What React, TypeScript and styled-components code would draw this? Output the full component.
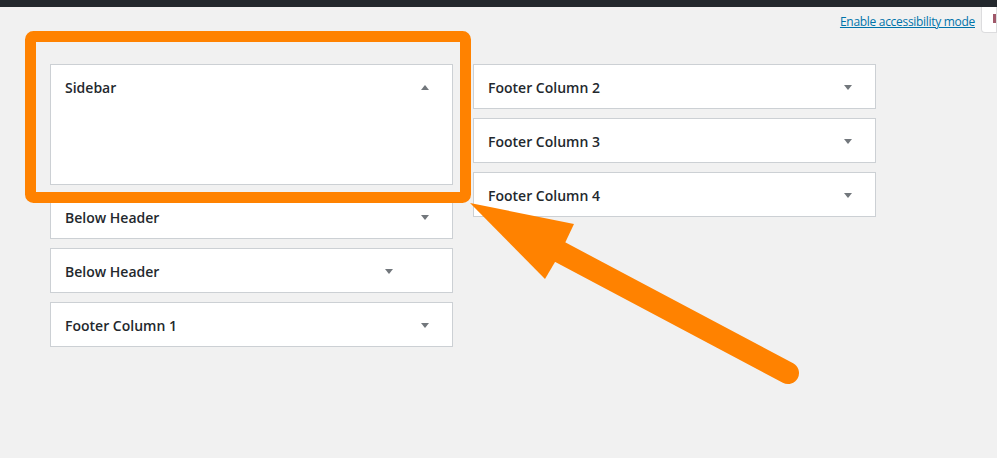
import React from 'react';
import styled, { createGlobalStyle } from 'styled-components';

const GlobalStyle = createGlobalStyle`
  html, body {
    margin: 0;
    padding: 0;
    background: #f1f1f1;
  }
  body {
    font-family: 'Open Sans', 'Noto Sans', sans-serif;
    color: #23282d;
    overflow: hidden;
  }
`;

type Widget = {
  title: string;
  open?: boolean;
  arrowOffset?: number;
};

const leftWidgets: Widget[] = [
  { title: 'Sidebar', open: true },
  { title: 'Below Header' },
  { title: 'Below Header', arrowOffset: 36 },
  { title: 'Footer Column 1' },
];

const rightWidgets: Widget[] = [
  { title: 'Footer Column 2' },
  { title: 'Footer Column 3' },
  { title: 'Footer Column 4' },
];

const Page = styled.div`
  position: relative;
  width: 997px;
  height: 458px;
  overflow: hidden;
`;

const AdminBar = styled.div`
  height: 7px;
  background: #23282d;
`;

const HeaderRow = styled.div`
  display: flex;
  justify-content: flex-end;
  align-items: flex-start;
  height: 57px;
`;

const A11yLink = styled.a`
  font-size: 12px;
  letter-spacing: -0.3px;
  color: #0073aa;
  text-decoration: underline;
  margin-top: 7px;
  margin-right: 6px;
  line-height: 16px;
  cursor: pointer;
`;

const ScreenTab = styled.div`
  width: 16px;
  height: 26px;
  background: #ffffff;
  border: 1px solid #dcdcde;
  border-top: none;
  border-radius: 0 0 0 4px;
  display: flex;
  justify-content: flex-end;
  padding-top: 7px;
  box-sizing: border-box;
`;

const TabGlyph = styled.span`
  width: 3px;
  height: 9px;
  background: #a0586a;
`;

const Columns = styled.div`
  display: grid;
  grid-template-columns: 403px 403px;
  column-gap: 20px;
  padding-left: 50px;
  align-items: start;
`;

const Column = styled.div`
  display: flex;
  flex-direction: column;
  gap: 9px;
`;

const WidgetBox = styled.div<{ open?: boolean }>`
  background: #ffffff;
  border: 1px solid #ccd0d4;
  box-sizing: border-box;
  height: ${(p) => (p.open ? '121px' : '45px')};
`;

const WidgetHead = styled.div`
  display: flex;
  align-items: center;
  justify-content: space-between;
  height: 43px;
  padding: 1px 23px 0 14px;
  box-sizing: border-box;
`;

const WidgetTitle = styled.h3`
  margin: 0;
  font-size: 14px;
  font-weight: 600;
  color: #23282d;
`;

const Toggle = styled.span<{ open?: boolean; offset?: number }>`
  width: 0;
  height: 0;
  border-left: 4px solid transparent;
  border-right: 4px solid transparent;
  ${(p) =>
    p.open
      ? 'border-bottom: 5px solid #72777c;'
      : 'border-top: 5px solid #72777c;'}
  margin-right: ${(p) => p.offset || 0}px;
`;

const Annotation = styled.svg`
  position: absolute;
  left: 0;
  top: 0;
  pointer-events: none;
`;

const WidgetItem: React.FC<{ widget: Widget }> = ({ widget }) => (
  <WidgetBox open={widget.open}>
    <WidgetHead>
      <WidgetTitle>{widget.title}</WidgetTitle>
      <Toggle open={widget.open} offset={widget.arrowOffset} />
    </WidgetHead>
  </WidgetBox>
);

const App: React.FC = () => {
  return (
    <Page>
      <GlobalStyle />
      <AdminBar />
      <HeaderRow>
        <A11yLink>Enable accessibility mode</A11yLink>
        <ScreenTab>
          <TabGlyph />
        </ScreenTab>
      </HeaderRow>
      <Columns>
        <Column>
          {leftWidgets.map((w, i) => (
            <WidgetItem key={i} widget={w} />
          ))}
        </Column>
        <Column>
          {rightWidgets.map((w, i) => (
            <WidgetItem key={i} widget={w} />
          ))}
        </Column>
      </Columns>
      <Annotation width='997' height='458' viewBox='0 0 997 458'>
        <rect
          x='30.5'
          y='36.5'
          width='435'
          height='161'
          rx='3'
          fill='none'
          stroke='#ff8200'
          strokeWidth='11'
        />
        <line
          x1='560'
          y1='252'
          x2='788'
          y2='373'
          stroke='#ff8200'
          strokeWidth='22'
          strokeLinecap='round'
        />
        <polygon
          points='470,203 574,224 565,243 555,262 545,279'
          fill='#ff8200'
        />
      </Annotation>
    </Page>
  );
};

export default App;
